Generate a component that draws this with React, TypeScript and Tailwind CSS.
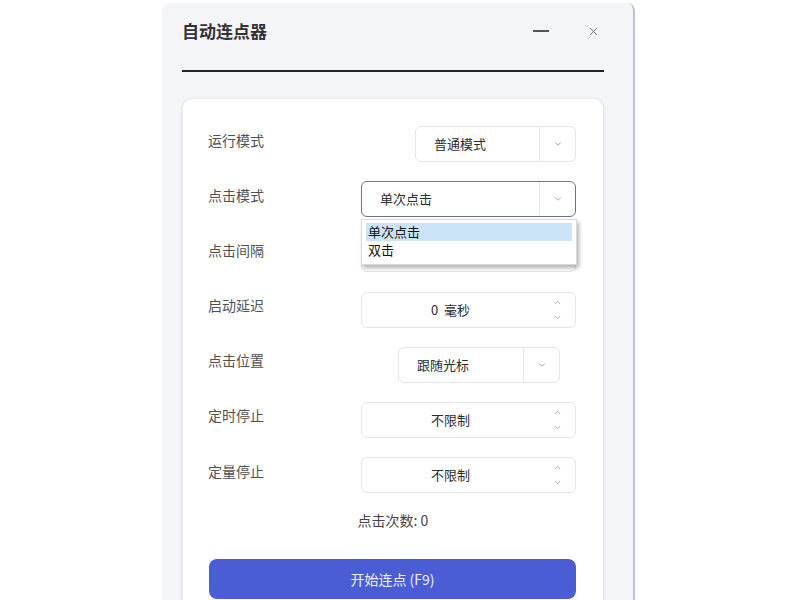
import React from 'react';
import { ChevronDown, ChevronUp, X } from 'lucide-react';

const font = { fontFamily: '"Noto Sans CJK SC", "Noto Sans", sans-serif' };

const Combo = ({ text, width, offset, focused = false }: { text: string; width: string; offset: string; focused?: boolean }) => (
  <div
    className={`${width} ${offset} h-[36px] flex items-stretch rounded-md bg-white border ${
      focused ? 'border-[#6b7585]' : 'border-[#e1e4e8]'
    }`}
  >
    <div className="flex-1 flex items-center text-[13px] text-[#2b2b2b] pl-[18px]">{text}</div>
    <div className="w-[36px] border-l border-[#e6e8eb] flex items-center justify-center">
      <ChevronDown size={10} strokeWidth={2} className="text-[#8a8f96]" />
    </div>
  </div>
);

const Spin = ({ text }: { text: string }) => (
  <div className="w-[215px] h-[36px] flex items-stretch rounded-md bg-white border border-[#e1e4e8]">
    <div className="flex-1 flex items-center justify-center text-[13px] text-[#2b2b2b] whitespace-pre">{text}</div>
    <div className="w-[36px] flex flex-col items-center justify-center gap-[6px]">
      <ChevronUp size={9} strokeWidth={2} className="text-[#8a8f96]" />
      <ChevronDown size={9} strokeWidth={2} className="text-[#8a8f96]" />
    </div>
  </div>
);

const Row = ({ label, children }: { label: string; children: React.ReactNode }) => (
  <div className="relative flex items-center h-[36px]">
    <div className="w-[153px] text-[14px] text-[#505050] mb-[8px]">{label}</div>
    <div className="w-[215px] flex">{children}</div>
  </div>
);

export default function App() {
  return (
    <div className="w-[800px] h-[600px] bg-white overflow-hidden flex" style={font}>
      <div className="ml-[162px] mt-[3px] w-[473px] h-[640px] bg-[#f3f5f8] rounded-t-lg border-r-2 border-[#b9c3cd] pl-[20px] pr-[29px]">
        <div className="h-[56px] flex items-center justify-between">
          <h1 className="text-[17px] font-bold text-[#333]">自动连点器</h1>
          <div className="flex items-center gap-[38px] pr-[4px]">
            <div className="w-[16px] h-[2px] bg-[#555]" />
            <X size={13} strokeWidth={1.6} className="text-[#666]" />
          </div>
        </div>
        <div className="mt-[11px] h-[2px] bg-[#222]" />

        <div className="mt-[26px] bg-white rounded-[10px] border border-[#e4e7eb] shadow-sm pl-[25px] pr-[25px] pt-[27px] pb-[20px]">
          <div className="flex flex-col gap-[19.2px]">
            <Row label="运行模式">
              <Combo text="普通模式" width="w-[161px]" offset="ml-[54px]" />
            </Row>
            <Row label="点击模式">
              <Combo text="单次点击" width="w-[215px]" offset="ml-0" focused />
              <div className="absolute left-[153px] top-[38px] w-[216px] h-[46px] bg-white border border-[#d6d9dd] shadow-[2px_3px_4px_rgba(0,0,0,0.3)] z-10 py-[3px] px-[4px] text-[13px] text-[#111]">
                <div className="h-[18px] bg-[#cce4f7] flex items-center pl-[2px]">单次点击</div>
                <div className="h-[18px] flex items-center pl-[2px]">双击</div>
              </div>
            </Row>
            <Row label="点击间隔">
              <Spin text="100  毫秒" />
            </Row>
            <Row label="启动延迟">
              <Spin text="0  毫秒" />
            </Row>
            <Row label="点击位置">
              <Combo text="跟随光标" width="w-[162px]" offset="ml-[37px]" />
            </Row>
            <Row label="定时停止">
              <Spin text="不限制" />
            </Row>
            <Row label="定量停止">
              <Spin text="不限制" />
            </Row>
          </div>

          <div className="mt-[17px] text-center text-[14px] text-[#444]">点击次数: 0</div>

          <button className="mt-[28px] ml-[1px] w-[367px] h-[40px] rounded-lg bg-[#4a5dd4] text-[14px] text-[#eef0ff]">
            开始连点 (F9)
          </button>
        </div>
      </div>
    </div>
  );
}
